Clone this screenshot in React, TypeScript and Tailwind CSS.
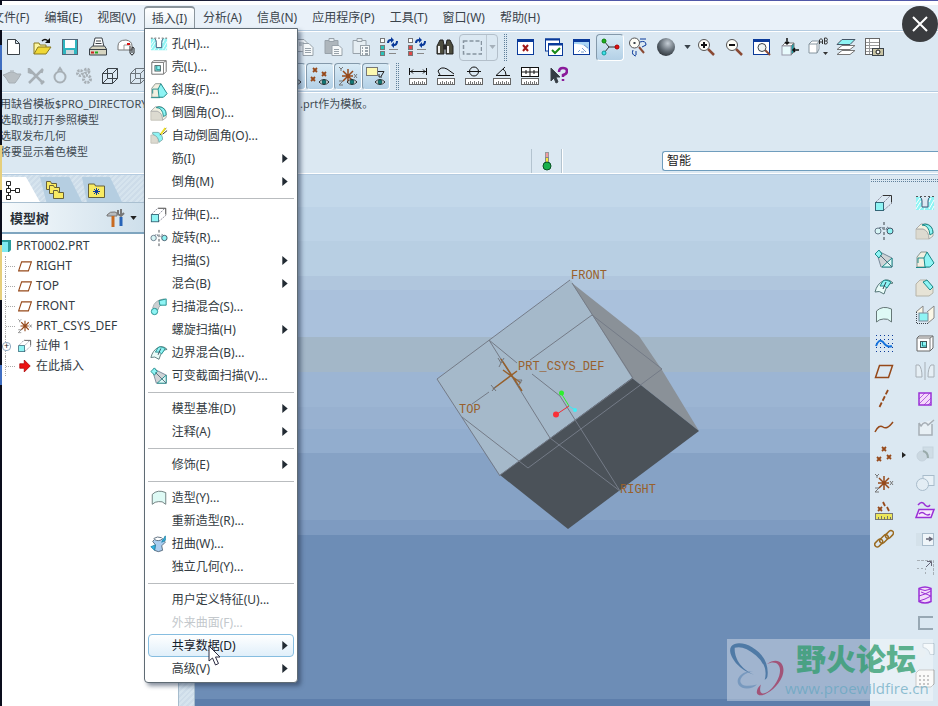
import type { ReactNode } from "react";

const K = "#3b4248";
const B = "#96491a";
const C = "#8ff4f4";
const T = "#1c8a8a";
const G = "#a7afb6";
const P = "#9a2fd6";
const N = "#0a3a9a";

function Ic({ children }: { children: ReactNode }) {
  return (
    <svg viewBox="0 0 20 20" className="h-5 w-5 shrink-0" fill="none" stroke={K} strokeWidth="1" aria-hidden="true">
      {children}
    </svg>
  );
}

/* ---------- shared glyph pieces ---------- */
const Ruler = () => (
  <g>
    <rect x="1.500" y="12.500" width="17" height="6" fill="#fff" stroke="#666" />
    <path d="M4.500 18v-2M6.500 18v-3M8.500 18v-2M10.500 18v-3M12.500 18v-2M14.500 18v-3M16.500 18v-2" stroke="#777" />
  </g>
);
const Eye = () => (
  <g>
    <path d="M9 16q5-5 10 0q-5 5-10 0z" fill="#fff" stroke="#222" />
    <circle cx="14" cy="16" r="2" fill="#127a78" stroke="#0c5050" />
  </g>
);
const Cube = ({ c = K }: { c?: string }) => (
  <path d="M2.500 7.500h10v10h-10zM7.500 2.500h10v10h-10zM2.500 7.500l5-5M12.500 7.500l5-5M2.500 17.500l5-5M12.500 17.500l5-5" stroke={c} />
);
const Window = ({ children }: { children?: ReactNode }) => (
  <g>
    <rect x="1.500" y="2.500" width="16" height="15" fill="#fff" stroke={N} />
    <path d="M1 3.500h17" stroke={N} strokeWidth="3" />
    {children}
  </g>
);
const Lens = ({ children }: { children?: ReactNode }) => (
  <g>
    <path d="M12 12l6 6" stroke="#8a4a34" strokeWidth="2.500" />
    <circle cx="8" cy="8" r="5.500" fill="#fdfdf6" stroke="#555" />
    {children}
  </g>
);
const ListSync = ({ c }: { c: string }) => (
  <g>
    <rect x="1.500" y="1.500" width="4" height="4" fill="#fff" stroke="#777" />
    <rect x="1.500" y="8.500" width="4" height="4" fill={c} stroke="#777" />
    <rect x="1.500" y="14.500" width="4" height="4" fill={c} stroke="#777" />
    <path d="M10 12.500h9M10 16.500h7" stroke="#888" />
    <path d="M9 6q0-3 3-3M18 4q0 4-3 4" stroke={N} strokeWidth="2" />
    <path d="M12 0v6l3-3zM15 5v6l-3-3z" stroke="none" fill={N} />
  </g>
);
const Datum3 = ({ c = B }: { c?: string }) => (
  <g>
    <path d="M10 3v14M4 10h11M5 5l10 10M15 5L5 15" stroke={c} strokeWidth="1.500" />
    <path d="M1 1l2 2 2-2M3 3v2M16 8l3 4M19 8l-3 4M1 15h4l-4 4h4" stroke="#777" />
  </g>
);
const Points = () => (
  <path d="M8 2l4 4M12 2l-4 4M3 12l4 4M7 12l-4 4M13 10l4 4M17 10l-4 4" stroke={B} strokeWidth="1.800" />
);

/* ---------- icon library ---------- */
const icons: Record<string, ReactNode> = {
  new: <path d="M3.500 2.500h8l4 4v11h-12zM11.500 2.500v4h4" fill="#fff" />,
  open: (
    <g>
      <path d="M2 17V6h5l1 2h6v3" fill="#fdf6a0" stroke="#8a7a20" />
      <path d="M2 17l4-7h13l-5 7z" fill="#f0d836" stroke="#8a7a20" />
      <path d="M10 4q3-3 6 0" stroke="#111" strokeWidth="1.500" />
      <path d="M18 1v5h-5z" stroke="none" fill="#111" />
    </g>
  ),
  save: (
    <g>
      <rect x="2.500" y="2.500" width="15" height="15" fill="#2fb6c0" stroke="#567" />
      <rect x="5" y="3" width="10" height="8" fill="#fff" stroke="none" />
      <rect x="6" y="13" width="8" height="4" fill="#cfd8dc" stroke="none" />
    </g>
  ),
  print: (
    <g>
      <path d="M5 10l2-9h7l2 9" fill="#fff" />
      <path d="M8 4h5M7.500 6.500h6" />
      <path d="M1.500 12l3-3h12l2 3v6h-17z" fill="#d6d4c0" />
      <path d="M1.500 12.500h17" />
      <path d="M3 15.500h3" stroke="#c22" strokeWidth="2" />
      <path d="M7 15.500h3" stroke="#2a2" strokeWidth="2" />
    </g>
  ),
  mail: (
    <g>
      <path d="M2 9q0-6 8-6 6 1 6 6v4H2z" fill="#fff" stroke="#777" />
      <path d="M8 13V8h7" stroke="#999" />
      <path d="M11 7h3" stroke="#d11" strokeWidth="2" />
      <path d="M14 9v7q2 4 4 0v-5q-2-2-2 0v5" stroke="#222" />
    </g>
  ),
  copy: (
    <g stroke="#98a2aa">
      <path d="M2 2.500h7l3 3v9H2z" fill="#eef3f6" />
      <path d="M8 6.500h6l4 4v8H8z" fill="#f6f9fa" />
      <path d="M10 11.500h6M10 13.500h6M10 15.500h6M4 6h5M4 8h3" />
    </g>
  ),
  paste: (
    <g stroke="#98a2aa">
      <path d="M2 3.500h13v13H2z" fill="#aeb6bc" />
      <path d="M6 1.500h5v3H6z" fill="#e6ecf0" />
      <path d="M9 8.500h7l3 3v7H9z" fill="#f6f9fa" />
      <path d="M11 12.500h5M11 14.500h5M11 16.500h5" />
    </g>
  ),
  pasteSp: (
    <g stroke="#98a2aa">
      <path d="M2 3.500h13v13H2z" fill="#e6eef3" />
      <path d="M6 1.500h5v3H6z" fill="#e6ecf0" />
      <rect x="9.500" y="8.500" width="9" height="10" fill="#f6f9fa" />
      <path d="M11 11h1M14 11h3M11 14h1M14 14h3M11 17h1M14 17h3" strokeWidth="2" />
    </g>
  ),
  regen: <ListSync c="#2ac2b8" />,
  regen2: <ListSync c="#e04848" />,
  find: (
    <g stroke="#222">
      <path d="M2 17V9l3-6h3l1 5v9zM11 17V8l1-5h3l3 6v8z" fill="#4d4d3e" />
      <path d="M4 9v7M13 9v7" stroke="#eee" strokeWidth="2" />
      <path d="M9 8h2v4H9z" fill="#333" />
    </g>
  ),
  marquee: <rect x="1.500" y="4" width="18" height="13" stroke="#8794a0" strokeWidth="1.500" strokeDasharray="4 2" />,
  winX: (
    <Window>
      <path d="M7 8l5 6M12 8l-5 6" stroke="#a01818" strokeWidth="2" />
    </Window>
  ),
  winOk: (
    <g>
      <rect x="1.500" y="2" width="14" height="12" fill="#fff" stroke={N} />
      <path d="M1 2.500h15" stroke={N} strokeWidth="2" />
      <rect x="4.500" y="6.500" width="14" height="12" fill="#fff" stroke={N} />
      <path d="M4 7.500h15" stroke={N} strokeWidth="2" />
      <path d="M8 13l3 3 5-5" stroke="#178a17" strokeWidth="2" />
    </g>
  ),
  repaint: (
    <Window>
      <path d="M2 5h15v10q-2-9-15-8z" fill="#a9d5f5" stroke="none" />
      <path d="M6 15l2-2M10 11l4 4M12 8l4 3M9 15h3" stroke="#7b9fd0" />
    </Window>
  ),
  spin: (
    <g>
      <path d="M4 4l5 6h9M9 10l-5 6" stroke="#333" />
      <circle cx="4" cy="4" r="2" fill="#1eb01e" stroke="#0b800b" />
      <circle cx="17" cy="10" r="2" fill="#e01010" stroke="#a00" />
      <circle cx="4" cy="16" r="2" fill="#3fe0e8" stroke="#199" />
    </g>
  ),
  orient: (
    <g>
      <path d="M11 10l5 6" stroke="#8a4a34" strokeWidth="2" />
      <circle cx="6.500" cy="6" r="5" fill="#fdfdf6" stroke="#555" />
      <path d="M5.500 6h2" strokeWidth="2" />
      <path d="M12 2h6M12 5q6-2 6 3l-4 2M5 13q-2 5 3 6M8 14v4" stroke={N} />
    </g>
  ),
  zoomIn: (
    <Lens>
      <path d="M5 8h6M8 5v6" stroke="#111" strokeWidth="2" />
    </Lens>
  ),
  zoomOut: (
    <Lens>
      <path d="M5 8h6" stroke="#111" strokeWidth="2" />
    </Lens>
  ),
  refit: (
    <Window>
      <path d="M13 13l5 5" stroke="#8a4a34" strokeWidth="2" />
      <circle cx="10" cy="10.500" r="4" fill="#eef4f4" />
    </Window>
  ),
  reorient: (
    <g>
      <path d="M2 9l3-3h9l-3 3z" fill="#fff" stroke="#777" />
      <path d="M11 9l3-3v9l-3 3z" fill="#1fa0a8" stroke="#777" />
      <rect x="2" y="9" width="9" height="9" fill="#e8fafc" stroke="#99a" />
      <path d="M7 1v6M5 5l2 2 2-2M19 13h-6M15 11l-2 2 2 2" stroke="#111" strokeWidth="1.500" />
    </g>
  ),
  views: (
    <g>
      <path d="M1 7l3-3h7v8l-2 4H1z" fill="#fff" stroke="#8796a0" />
      <path d="M1 7h8v9M9 7l2-3" stroke="#8796a0" />
      <path d="M11.500 7V3q1.500-3 3 0v4M11.500 5h3M16.500 1v6h2q2-2 0-3 2-1 0-3zM16.500 4h2" stroke="#333" />
      <path d="M15 15h5l-2.500 3z" fill="#333" stroke="none" />
    </g>
  ),
  layers: (
    <g>
      <path d="M1 17.500l5-4h13l-5 4z" fill="#fff" stroke="#777" />
      <path d="M1 12.500l5-4h13l-5 4z" fill="#fff" stroke="#777" />
      <path d="M1 7.500l5-5h13l-5 5z" fill={C} stroke="#456" />
    </g>
  ),
  viewmgr: (
    <g>
      <rect x="1.500" y="1.500" width="14" height="16" fill="#fff" stroke="#666" />
      <path d="M5.500 2v15M2 5.500h13M2 8.500h13M2 11.500h13M2 14.500h13" stroke="#999" />
      <rect x="8.500" y="11.500" width="11" height="7" fill="#c9c4a4" />
      <circle cx="14" cy="15" r="2" fill="#fff" stroke="#111" />
    </g>
  ),
  teapot: <path d="M4 8q6-4 11 0l4 0-3 5-3 4H7L4 12 1 9zM8 5h4" fill="#b9c0c5" stroke="#a7afb5" />,
  tools: <path d="M3 3l14 14M17 3L3 17M3 2v4l3 1M14 5l3 1M15 18l3-3" stroke="#a7afb5" strokeWidth="2.500" />,
  ring: (
    <g stroke="#a7afb5">
      <circle cx="10" cy="11" r="5.500" strokeWidth="2" />
      <path d="M8 5l2-3 2 3" strokeWidth="2" />
    </g>
  ),
  gears: (
    <g stroke="#a7afb5" strokeWidth="3" strokeDasharray="2 1">
      <circle cx="6" cy="7" r="2.500" />
      <circle cx="13" cy="5" r="2" />
      <circle cx="13" cy="13" r="3.500" />
    </g>
  ),
  cube: <Cube />,
  cube2: <Cube c="#6d757c" />,
  dPlane: (
    <g>
      <path d="M2 10l3-7h9l-3 7z" stroke={B} />
      <Eye />
    </g>
  ),
  dPoints: (
    <g>
      <path d="M3 2l4 4M7 2l-4 4M1 11l4 4M5 11l-4 4M12 6l4 4M16 6l-4 4" stroke={B} strokeWidth="1.800" />
      <Eye />
    </g>
  ),
  dCsys: (
    <g>
      <Datum3 />
      <Eye />
    </g>
  ),
  dNote: (
    <g>
      <rect x="0.500" y="1.500" width="11" height="8" fill="#fdf9b0" stroke="#777" />
      <path d="M12 5.500h6l-3 5M13 8v3h3" stroke="#222" />
      <Eye />
    </g>
  ),
  mDist: (
    <g>
      <path d="M1.500 2v7M18.500 2v7M2 5.500h16M5 3.500l-2 2 2 2M15 3.500l2 2-2 2" stroke="#111" />
      <Ruler />
    </g>
  ),
  mLen: (
    <g>
      <path d="M2 9.500h16M4 9L2 5q3-5 9-2l7 5" stroke="#111" />
      <Ruler />
    </g>
  ),
  mDia: (
    <g>
      <circle cx="10" cy="5.500" r="4.500" stroke="#111" />
      <path d="M3 5.500h14" stroke="#111" />
      <Ruler />
    </g>
  ),
  mAng: (
    <g>
      <path d="M13 1L4 9.500h14M11 3q3 2 3 6" stroke="#111" />
      <Ruler />
    </g>
  ),
  mArea: (
    <g>
      <rect x="1.500" y="1.500" width="17" height="9" fill="#fff" stroke="#111" />
      <path d="M2 6h16M10 1v9M6 4v4M14 4v4" stroke="#111" />
      <Ruler />
    </g>
  ),
  help: (
    <g>
      <path d="M3 2v13l3-3 2 5 2-1-2-5h4z" fill="#333b44" />
      <path d="M11 6q0-4 4-4t4 3q0 3-4 4v2M15 13v2" stroke="#8a1a9a" strokeWidth="2.500" />
    </g>
  ),
  /* feature icons */
  hole: (
    <g>
      <path d="M1 4h4q2 0 2 4v6h6V8q0-4 2-4h4v13H1z" fill={C} stroke="none" />
      <path d="M1 11L5 5M1 16l5-8M4 17l4-5M9 17l1-2M14 16l5-9M17 17l2-4M14 9l2-4" stroke="#fff" />
      <path d="M5 4q2 1 2 4v6h6V8q0-3 2-4" stroke="#3c5574" />
      <path d="M1 3.500h18" stroke="#555" strokeDasharray="2 2" />
    </g>
  ),
  shell: (
    <g>
      <path d="M2 5l2-2h14v12l-3 3H2z" fill="#fff" stroke="#666" />
      <path d="M2 5h13v13M15 5l3-2" stroke="#777" />
      <rect x="5.500" y="8.500" width="6" height="6" fill={C} stroke="#455" />
      <path d="M7.500 9v4h4" stroke={T} />
    </g>
  ),
  draft: (
    <g>
      <path d="M2 8l4-5h6l6 12-4 3H2z" fill="#f2efe0" stroke="#8a968f" />
      <path d="M12 3l-3 6 1 9h5l4-4z" fill={C} stroke={T} />
      <path d="M1 18.500h10M3 14V9h6" stroke={T} />
    </g>
  ),
  round: (
    <g>
      <path d="M1 8h8q5 2 5 10H1z" fill="#dcdad0" stroke="#c4c2b8" />
      <path d="M1 8l5-5h6q7 2 6 12l-4 3q0-8-6-10z" fill="#f3f1e2" stroke="#aaa" />
      <path d="M7 4q7 0 8 10l3-2q0-8-8-9z" fill={C} stroke={T} />
    </g>
  ),
  autoRound: (
    <g>
      <path d="M1 9h8v9H1z" fill="#dcdad0" stroke="#c4c2b8" />
      <path d="M3 6h6q5 2 5 8l-4 3q0-6-7-9z" fill={C} stroke="#7aa" />
      <path d="M18 1l-7 8M19 4l-5 4" stroke="#222" />
      <path d="M17 1l-5 7" stroke="#f0e020" strokeWidth="2" />
    </g>
  ),
  extrude: (
    <g>
      <rect x="1.500" y="9.500" width="8" height="8" fill={C} stroke="#367" />
      <path d="M2 9l7-7M10 9l6-6M10 17l8-7" stroke="#889" strokeDasharray="2 1" />
      <path d="M9 2.500h8.500v7" stroke="#333" />
    </g>
  ),
  revolve: (
    <g>
      <circle cx="4" cy="10" r="3" fill="#d7f5f5" stroke="#678" />
      <circle cx="16" cy="10" r="3" fill={C} stroke="#456" />
      <path d="M10 1v18" strokeDasharray="3 2" />
      <path d="M5 7l3-1 1 3M12 9l1-3 2 1" stroke="#678" strokeDasharray="2 1" />
    </g>
  ),
  sweepBlend: (
    <g>
      <path d="M9 13q1-6 7-6V1Q5 2 3 11z" fill="#ccd0d2" stroke="#9aa" />
      <path d="M10 3l8-2v7h-7z" fill={C} stroke={T} />
      <circle cx="5" cy="15" r="3.500" fill={C} stroke={T} />
    </g>
  ),
  boundary: (
    <g>
      <path d="M1 15q2-8 8-11 5-3 10 2-6 0-9 11-5-4-9-2z" fill="#e9fbf8" stroke="#577" />
      <path d="M6 9q5-1 7 2l4-6q-6-3-8-1z" fill={C} stroke={T} />
      <path d="M9 12l3-7" stroke="#345" />
    </g>
  ),
  varSweep: (
    <g>
      <path d="M4 2l14 7v9H7L4 8z" fill="#cfd3d6" stroke="#789" />
      <path d="M8 18h10V9z" fill="#dff8f6" stroke={T} />
      <path d="M1 5l4-4 3 4-3 4z" fill={C} stroke={T} />
      <path d="M6 6l12 12" stroke="#567" />
    </g>
  ),
  style: <path d="M2.500 17V6q6-6 15-2v13q-4-4-8-3-4 0-7 3z" fill="#defaf5" stroke="#677" />,
  warp: (
    <g>
      <path d="M5 5q5 3 9-1l3 4-4 4 1 5q-5 3-9 0l1-6-3-4z" fill="#a9cdf0" stroke="#567" />
      <path d="M1 13l5-2-1 6zM17 1v5l-4 2z" fill="#30b5e8" stroke="#28a" />
      <path d="M4 4q4-3 9-1" stroke="#567" />
    </g>
  ),
  sketch: (
    <g>
      <path d="M2 2.500h17M2 6.500h17M2 10.500h17M2 14.500h17M2 18.500h17" stroke={N} strokeDasharray="1 3" />
      <path d="M2 13q3-8 7-4 4 6 9 4" stroke="#1673dc" strokeWidth="2" />
    </g>
  ),
  plane: <path d="M5.500 4.500h13l-4 12h-13z" stroke={B} strokeWidth="1.500" />,
  axis: <path d="M14 1L5 19" stroke={B} strokeWidth="1.800" strokeDasharray="5 2" />,
  curve: <path d="M1 15q4-8 8-5t10-5" stroke={B} strokeWidth="1.500" />,
  points: <Points />,
  csys: <Datum3 />,
  analysis: (
    <g>
      <path d="M4 6l4 4M8 6l-4 4M9 1l2 4M13 6l2 4" stroke={B} strokeWidth="1.800" />
      <rect x="1.500" y="12.500" width="17" height="6" fill="#ece65a" stroke="#777" />
      <path d="M4.500 16v3M7.500 15v4M10.500 16v3M13.500 15v4M16.500 16v3" stroke="#776" />
    </g>
  ),
  chain: (
    <g stroke="#9a6a20" strokeWidth="1.500">
      <rect x="0" y="12" width="9" height="5" rx="2.500" transform="rotate(-45 4 14)" />
      <rect x="5" y="7.500" width="10" height="5" rx="2.500" transform="rotate(-45 10 10)" />
      <rect x="11" y="3" width="9" height="5" rx="2.500" transform="rotate(-45 15.500 5.500)" />
    </g>
  ),
  chamfer: (
    <g>
      <path d="M1 7l4-4h7l6 7v6l-4 3H1z" fill="#e6e3d6" stroke="#b5b3a8" />
      <path d="M8 5l4-2 6 7-3 3z" fill={C} stroke={T} />
    </g>
  ),
  rib: (
    <g>
      <path d="M1 7l7-6v9M12 7l7-6v12l-6 5" fill="#fbf7e6" stroke="#888" />
      <rect x="4" y="8" width="9" height="8" fill={C} stroke="#789" />
      <path d="M1.500 7v11.500h12" strokeDasharray="1 1" />
    </g>
  ),
  mirror: (
    <g stroke={G}>
      <path d="M10 1v18" />
      <path d="M1 4h3q3 3 3 12H1zM19 4h-3q-3 3-3 12h6z" fill="#e6eff5" />
    </g>
  ),
  fill: (
    <g>
      <rect x="4" y="4" width="12" height="12" fill="#f4d9fa" stroke={P} strokeWidth="1.500" />
      <path d="M4 10l6-6M4 15L15 4M9 16l7-7M13 16l3-3" stroke={P} strokeWidth=".7" />
    </g>
  ),
  trimS: <path d="M4 6l2 3q4-6 7-1l6-5M4 6v12h13V7" stroke={G} strokeWidth="1.500" fill="#e8f0f5" />,
  merge: (
    <g stroke="#c6d3dd">
      <rect x="8" y="2" width="10" height="11" fill="#cfdde6" />
      <circle cx="7" cy="11" r="5" fill="#cbd8e1" />
      <path d="M8 6q5 1 5 7" stroke="#9aa" strokeWidth="2" />
    </g>
  ),
  intersect: (
    <g stroke="#a9bccb">
      <rect x="8" y="2.500" width="11" height="10" fill="#e8f1f7" />
      <circle cx="7.500" cy="11.500" r="6" fill="#e3edf4" />
    </g>
  ),
  offset: (
    <g stroke={P} strokeWidth="1.500">
      <path d="M3 4q4-5 7 0 3 3 5 0" />
      <path d="M4 8.500h15l-3 8H1z" fill="#f7e8fc" />
      <path d="M4 13q3-3 6 0 3 2 5 0" />
    </g>
  ),
  extend: (
    <g stroke="#a9bccb">
      <path d="M1 4h7v13H1z" fill="#d4e1ea" stroke="none" />
      <rect x="7.500" y="4.500" width="11" height="12" fill="#eff5f9" />
      <path d="M11 10h6M14 8l3 2-3 2" stroke="#667" strokeWidth="1.500" />
    </g>
  ),
  trim: (
    <g stroke={G}>
      <path d="M2 3.500h16.500V18" strokeDasharray="3 1" />
      <path d="M2 11.500h8.500V18" strokeDasharray="2 2" />
      <path d="M11 10l5-5M12 4.500h4.500V9" stroke="#667" />
    </g>
  ),
  thicken: (
    <g stroke={P}>
      <path d="M4 3.500q6-3 12 0v13q-6 3-12 0z" fill="#f2dcfa" strokeWidth="1.500" />
      <path d="M4 4q6 3 12 0M4 11l6-2 6-3M4 16l6-2 6-3M6 7l10 4" />
    </g>
  ),
  pattern: <path d="M18 4H4v12h14" stroke="#98a8b4" strokeWidth="2" />,
  corner: (
    <g stroke="#b5c5d0">
      <path d="M8 2.500h11v11h-4q-1-6-7-7z" fill="#f2f7fa" />
      <circle cx="6" cy="12" r="5" fill="#dde8ef" stroke="none" />
    </g>
  ),
  grid: (
    <g stroke="#aaa">
      <path d="M1 4l3-3h15v14l-3 3H1z" fill="#f8f8f6" />
      <path d="M4 7h11M4 11h11M4 15h11" strokeDasharray="2 2" strokeWidth="2" />
    </g>
  ),
};

const menus = ["文件(F)", "编辑(E)", "视图(V)", "插入(I)", "分析(A)", "信息(N)", "应用程序(P)", "工具(T)", "窗口(W)", "帮助(H)"];

type Item = { t: string; i?: string; sub?: boolean; off?: boolean; hot?: boolean };
const groups: Item[][] = [
  [
    { t: "孔(H)...", i: "hole" },
    { t: "壳(L)...", i: "shell" },
    { t: "斜度(F)...", i: "draft" },
    { t: "倒圆角(O)...", i: "round" },
    { t: "自动倒圆角(O)...", i: "autoRound" },
    { t: "筋(I)", sub: true },
    { t: "倒角(M)", sub: true },
  ],
  [
    { t: "拉伸(E)...", i: "extrude" },
    { t: "旋转(R)...", i: "revolve" },
    { t: "扫描(S)", sub: true },
    { t: "混合(B)", sub: true },
    { t: "扫描混合(S)...", i: "sweepBlend" },
    { t: "螺旋扫描(H)", sub: true },
    { t: "边界混合(B)...", i: "boundary" },
    { t: "可变截面扫描(V)...", i: "varSweep" },
  ],
  [
    { t: "模型基准(D)", sub: true },
    { t: "注释(A)", sub: true },
  ],
  [{ t: "修饰(E)", sub: true }],
  [{ t: "造型(Y)...", i: "style" }, { t: "重新造型(R)..." }, { t: "扭曲(W)...", i: "warp" }, { t: "独立几何(Y)..." }],
  [
    { t: "用户定义特征(U)..." },
    { t: "外来曲面(F)...", off: true },
    { t: "共享数据(D)", sub: true, hot: true },
    { t: "高级(V)", sub: true },
  ],
];

function InsertMenu() {
  return (
    <div role="menu" className="absolute top-[22px] left-0 w-[154px] rounded-b border border-[#5f6b74] bg-white px-[3px] pt-[3px] pb-[2px] shadow-[3px_3px_4px_rgba(40,55,80,0.55)]">
      {groups.map((g, n) => (
        <div key={n} role="group">
          {n > 0 && (
            <div className="flex h-[10px] items-center">
              <div className="h-px w-full bg-[#b9bcbf]" />
            </div>
          )}
          {g.map((m) => (
            <button
              key={m.t}
              role="menuitem"
              disabled={m.off}
              className={
                "flex h-[23px] w-full items-center rounded-sm border pr-[5px] text-left whitespace-nowrap " +
                (m.hot
                  ? "border-[#86bde0] bg-gradient-to-b from-white to-[#e0effa] text-[#14202a]"
                  : m.off
                    ? "border-transparent text-[#c3c8cc]"
                    : "border-transparent text-[#333b42]")
              }
            >
              <span className="flex w-[23px] shrink-0">
                {m.i && (
                  <span className="scale-90">
                    <Ic>{icons[m.i]}</Ic>
                  </span>
                )}
              </span>
              <span className="flex-1">{m.t}</span>
              {m.sub && (
                <svg viewBox="0 0 6 10" className="h-[9px] w-[6px]" aria-hidden="true">
                  <path d="M0 0l6 5-6 5z" fill="#222b33" />
                </svg>
              )}
            </button>
          ))}
        </div>
      ))}
    </div>
  );
}

function Tool({ i, on, narrow }: { i: string; on?: boolean; narrow?: boolean }) {
  return (
    <button
      aria-label={i}
      className={
        "flex h-[27px] shrink-0 items-center justify-center rounded-[4px] border " +
        (narrow ? "w-6 " : "w-7 ") +
        (on ? "border-[#8499aa] border-r-white border-b-white bg-gradient-to-b from-[#d9ebf6] to-[#b3d0e6]" : "border-transparent")
      }
    >
      <Ic>{icons[i]}</Ic>
    </button>
  );
}

const Grip = () => (
  <span className="flex w-[14px] shrink-0 justify-center">
    <span className="h-[27px] w-1 bg-[conic-gradient(#5f7f9a_25%,transparent_0)] bg-[size:2px_2px]" />
  </span>
);

const Down = ({ c }: { c: string }) => (
  <svg viewBox="0 0 8 5" className="h-1 w-[7px]" aria-hidden="true">
    <path d="M0 0h8L4 5z" fill={c} />
  </svg>
);

function Toolbars() {
  return (
    <div className="overflow-hidden border-t border-[#b4cbe0] bg-[#dbe8f2] pt-[2px] shadow-[inset_0_1px_0_#fff]">
      <div className="flex h-7 items-center">
        {["new", "open", "save", "print", "mail"].map((i) => <Tool key={i} i={i} />)}
        <span className="w-[151px] shrink-0" />
        {["copy", "paste", "pasteSp", "regen", "regen2", "find"].map((i) => <Tool key={i} i={i} />)}
        <button aria-label="select" className="flex h-[27px] w-[39px] shrink-0 items-center rounded border border-[#b3bfca] pl-[2px]">
          <Ic>{icons.marquee}</Ic>
          <span className="ml-[4px] flex h-full flex-1 items-center justify-center border-l border-[#bcc8d2]">
            <Down c="#a5b0ba" />
          </span>
        </button>
        <Grip />
        {["winX", "winOk", "repaint"].map((i) => <Tool key={i} i={i} />)}
        <Tool i="spin" on />
        <Tool i="orient" />
        <button aria-label="shade" className="flex w-10 shrink-0 items-center gap-[9px] pl-[5px]">
          <span className="h-[18px] w-[18px] rounded-full bg-[radial-gradient(circle_at_60%_30%,#c5ced6,#5c666f_50%,#101418)]" />
          <Down c="#3a434b" />
        </button>
        {["zoomIn", "zoomOut", "refit", "reorient", "views", "layers", "viewmgr"].map((i) => <Tool key={i} i={i} />)}
      </div>
      <div className="flex h-[30px] items-center">
        {["teapot", "tools", "ring", "gears"].map((i) => <Tool key={i} i={i} narrow />)}
        {["cube", "cube2"].map((i) => <Tool key={i} i={i} />)}
        <span className="w-[126px] shrink-0" />
        {["dPlane", "dPoints", "dCsys", "dNote"].map((i) => <Tool key={i} i={i} on />)}
        <Grip />
        {["mDist", "mLen", "mDia", "mAng", "mArea", "help"].map((i) => <Tool key={i} i={i} />)}
      </div>
    </div>
  );
}

function Messages() {
  return (
    <div className="flex h-[84px] border-y border-[#b4cbe0] bg-[#dbe8f2] shadow-[inset_0_1px_0_#fff,inset_0_-1px_0_#fff]">
      <div className="flex-1 pt-1 text-[11px] leading-4 whitespace-nowrap text-[#414b53]">
        <p className="flex">
          <span className="w-[300px]">用缺省模板$PRO_DIRECTORY</span>
          <span>.prt作为模板。</span>
        </p>
        <p>选取或打开参照模型</p>
        <p>选取发布几何</p>
        <p>将要显示着色模型</p>
      </div>
      <div className="flex w-[407px] items-center self-end pb-px">
        <span className="flex h-6 w-[31px] items-center justify-center border-x border-[#b3c3cf] shadow-[1px_0_0_#fff]">
          <svg viewBox="0 0 10 20" className="h-5 w-[10px]" aria-hidden="true">
            <rect x="3.500" y="1.500" width="3" height="5" fill="#f09aa0" stroke="#999" />
            <rect x="3.500" y="6.500" width="3" height="5" fill="#f6e940" stroke="#888" />
            <circle cx="5" cy="15" r="4" fill="#18b04c" stroke="#0a5224" />
          </svg>
        </span>
        <select aria-label="选择过滤器" className="ml-[100px] h-5 flex-1 appearance-none rounded-l-[3px] border border-r-0 border-[#6f9dbd] bg-white pl-1 text-xs leading-4 text-[#222]">
          <option>智能</option>
        </select>
      </div>
    </div>
  );
}

const tree: { t: string; i: string; plus?: boolean }[] = [
  { t: "RIGHT", i: "plane" },
  { t: "TOP", i: "plane" },
  { t: "FRONT", i: "plane" },
  { t: "PRT_CSYS_DEF", i: "csys" },
  { t: "拉伸 1", i: "extrude", plus: true },
  { t: "在此插入", i: "arrow" },
];

function ModelTree() {
  return (
    <aside className="flex w-[178px] shrink-0 flex-col bg-white">
      <div className="flex h-7 items-end border-b border-[#a9bfd0] bg-[repeating-linear-gradient(135deg,#cddce9_0_2px,#d6e4ee_2px_4px)]">
        <button aria-label="模型树" className="flex h-[25px] w-10 items-center bg-white pl-1 [clip-path:polygon(0_0,65%_0,100%_100%,0_100%)]">
          <Ic>
            <path d="M2.500 1.500h4v4h-4zM2.500 8.500h4v4h-4zM2.500 15.500h4v4h-4zM11.500 8.500h4v4h-4zM7 10.500h4M4.500 5.500v3M4.500 12.500v3" stroke="#222" />
          </Ic>
        </button>
        <button aria-label="文件夹浏览器" className="flex h-[25px] w-[42px] items-center bg-[#b5cee1] pl-[5px] [clip-path:polygon(0_0,70%_0,100%_100%,15%_100%)]">
          <Ic>
            <g fill="#f8ea62" stroke="#66603a">
              <path d="M1.500 1.500h4l1 2h5v6h-10z" />
              <path d="M4.500 5.500h4l1 2h5v6h-10z" />
              <path d="M8.500 10.500h4l1 2h5v6h-10z" />
            </g>
          </Ic>
        </button>
        <button aria-label="收藏夹" className="flex h-[25px] w-10 items-center bg-[#b5cee1] pl-[5px] [clip-path:polygon(0_0,70%_0,100%_100%,12%_100%)]">
          <Ic>
            <path d="M1.500 4h6l1 2h9v11.500h-16z" fill="#f8ea62" stroke="#66603a" />
            <path d="M9.500 8v7M6 11.500h7M7 9l5 5M12 9l-5 5" stroke="#123c9c" />
          </Ic>
        </button>
      </div>
      <div className="flex h-[31px] items-center border-b-2 border-[#7fa5bf] bg-gradient-to-r from-[#f6fafc] to-[#c5d9e7] pl-[10px]">
        <h2 className="w-24 text-[13px] leading-4 font-bold text-[#2a3138]">模型树</h2>
        <button aria-label="设置" className="flex items-center gap-1">
          <Ic>
            <path d="M1 7q3-4 8-3l2 1v3H1z" fill="#b7bcc0" stroke="#777" />
            <path d="M7 8v11" stroke="#c86a20" strokeWidth="3" />
            <path d="M12 2v4l3 2 3-3M15 1v7" stroke="#777" strokeWidth="2" />
            <path d="M15 9v9" stroke="#2864b8" strokeWidth="3" />
          </Ic>
          <Down c="#222" />
        </button>
      </div>
      <ul className="pt-[2px] text-xs leading-4 text-[#333b42]">
        <li className="flex h-5 items-center gap-[5px]">
          <svg viewBox="0 0 11 12" className="h-3 w-[11px]" aria-hidden="true">
            <path d="M0 2l2-2h9v10l-2 2H0z" fill="#2a9c9c" />
            <path d="M0 2h8v10H0z" fill="#7feaf0" />
          </svg>
          <span>PRT0002.PRT</span>
        </li>
        {tree.map((r) => (
          <li key={r.t} className="flex h-5 items-center">
            <span className="ml-[5px] flex h-5 w-[10px] items-center border-l border-dotted border-[#aaa]">
              {r.plus ? (
                <button aria-label="展开" className="-ml-1 h-[9px] w-[9px] rounded-sm border border-[#8fa8c0] bg-white text-[9px] leading-[6px] text-[#222]">
                  +
                </button>
              ) : (
                <span className="w-full border-t border-dotted border-[#aaa]" />
              )}
            </span>
            <span className="mr-px scale-75">
              <Ic>{r.i === "arrow" ? <path d="M3 7h6V2l8 8-8 8v-5H3z" fill="#ec1212" stroke="#a00" /> : icons[r.i]}</Ic>
            </span>
            <span>{r.t}</span>
          </li>
        ))}
      </ul>
    </aside>
  );
}

function Viewport() {
  return (
    <main className="relative min-w-0 flex-1 overflow-hidden bg-[linear-gradient(to_bottom,#c3d8ea_0_32px,#bdd3e7_32px_66px,#b8cfe3_66px_101px,#b0c6dd_101px_115px,#aac1dc_115px_162px,#a3b7c8_162px_197px,#9cb5d3_197px_232px,#98b1d0_232px_254px,#92adce_254px_278px,#86a2c5_278px_345px,#7e9bc1_345px_360px,#6d8db6_360px_524px,#5d7eab_524px)]">
      <svg viewBox="195 175 675 531" className="absolute top-0 left-0 h-[531px] w-[675px]" fill="none" aria-label="PRT0002">
        <path d="M571 280L437 379l63 96 132-97z" fill="#a5b9ca" />
        <path d="M572 283l67 53 23 34 37 61-67-53z" fill="#8a9198" />
        <path d="M500 475l132-97 67 53-131 98z" fill="#4b5259" />
        <g stroke="#747b87">
          <path d="M570 280L437 379l63 97M572 283l61 95-133 97" />
          <path d="M530 360l62-45 70 54-134 99-66-51M472 404l17-12" />
          <path d="M489 340l61 98 70 53M489 340l28 23M532 374l28 22 60 95" />
        </g>
        <g stroke="#96602c" strokeWidth="1.500">
          <path d="M501 359l21 32M493 389l24-18M503 370l18 13" />
        </g>
        <path d="M498 358l3 5 3-5M501 363l-2 4M491 385l5 6M496 386l-4 5M517 380h5l-4 6" stroke="#70757c" />
        <path d="M569 406l-8-13" stroke="#2df02d" />
        <path d="M569 406l-12 8" stroke="#f02c34" />
        <path d="M569 406l6 4" stroke="#3de8f4" />
        <circle cx="561.500" cy="393" r="2.500" fill="#2df02d" />
        <circle cx="556" cy="414.500" r="3" fill="#fa3038" />
        <circle cx="575" cy="410" r="2" fill="#3df0f8" />
        <g fill="#98602c" className="font-['Liberation_Mono',monospace] text-[12px]">
          <text x="571" y="279">FRONT</text>
          <text x="518" y="370">PRT_CSYS_DEF</text>
          <text x="459" y="413">TOP</text>
          <text x="620" y="493">RIGHT</text>
        </g>
      </svg>
    </main>
  );
}

const colA = ["extrude", "revolve", "varSweep", "boundary", "style", "sketch", "plane", "axis", "curve", "points", "csys", "analysis", "chain"];
const colB = ["hole", "round", "draft", "chamfer", "rib", "shell", "mirror", "fill", "trimS", "merge", "intersect", "offset", "extend", "trim", "thicken", "pattern", "corner", "grid"];

function FeatureBars() {
  return (
    <div className="w-[68px] shrink-0 overflow-hidden bg-[#dbe8f2] pt-1">
      <div className="h-1 bg-[conic-gradient(#5f7f9a_25%,transparent_0)] bg-[size:2px_2px]" />
      <div className="flex justify-between pt-[6px]">
        <div className="flex w-9 flex-col">
          {colA.map((i) => (
            <div key={i} className="flex h-7 items-center">
              <Tool i={i} />
              {i === "points" && (
                <svg viewBox="0 0 4 6" className="ml-1 h-[6px] w-1" aria-hidden="true">
                  <path d="M0 0l4 3-4 3z" fill="#222" />
                </svg>
              )}
            </div>
          ))}
        </div>
        <div className="flex w-[27px] flex-col">
          {colB.map((i) => (
            <div key={i} className="flex h-7 items-center">
              <Tool i={i} />
            </div>
          ))}
        </div>
      </div>
    </div>
  );
}

function Watermark() {
  return (
    <div className="pointer-events-none absolute right-[5px] bottom-[5px] flex h-[62px] w-[206px] bg-white/35">
      <svg viewBox="0 0 60 62" className="h-[62px] w-[58px] shrink-0" aria-hidden="true">
        <g opacity=".8">
          <path d="M28 36C8 30-4 8 8 4s36 10 34 32q0 4-3 5 4-14-9-25T8 8s-2 18 20 28z" fill="#3c6c9c" />
          <path d="M27 32C10 32 6 47 18 50q8 1 13-4-8 2-13 1c-8-3-4-12 9-15z" fill="#6f93bb" />
          <path d="M41 25c12-9 21 0 16 13S34 62 31 55q-1-4 4-9-2 8 1 9c5 2 15-8 18-18s-2-17-13-12z" fill="#a33d63" />
        </g>
      </svg>
      <div className="whitespace-nowrap">
        <p className="pl-[11px] text-[30px] leading-[40px] font-black text-[#2e9b6c]/75">野火论坛</p>
        <p className="font-['Open_Sans',sans-serif] text-[15px] leading-[18px] text-[#63a6c0]/70">www.proewildfire.cn</p>
      </div>
    </div>
  );
}

export default function App() {
  return (
    <div className="relative flex h-screen w-full flex-col overflow-hidden bg-white font-['Noto_Sans','Noto_Sans_CJK_SC',sans-serif] text-xs">
      <div className="flex h-[5px] shrink-0 flex-col">
        <div className="h-px bg-gradient-to-r from-[#15182c] from-20% to-[#5057a8] to-40%" />
      </div>
      <nav className="relative z-20 -ml-[15px] flex h-[25px] shrink-0 gap-px bg-[#e9f1f9] pt-px text-[#3a434b]">
        {menus.map((m) => {
          const open = m === "插入(I)";
          return (
            <div key={m} className="relative">
              <button
                aria-haspopup="menu"
                aria-expanded={open}
                className={
                  "h-6 px-[7px] whitespace-nowrap " +
                  (open ? "rounded-t border border-t-2 border-b-0 border-[#8b959c] bg-gradient-to-b from-white to-[#e6eff6] leading-[18px]" : "leading-[22px]")
                }
              >
                {m}
              </button>
              {open && <InsertMenu />}
            </div>
          );
        })}
      </nav>
      <div className="shrink-0">
        <Toolbars />
      </div>
      <div className="shrink-0">
        <Messages />
      </div>
      <div className="flex min-h-0 flex-1">
        <ModelTree />
        <div className="w-[17px] shrink-0 border-x border-[#a6bccd] bg-[repeating-linear-gradient(135deg,#cddce9_0_2px,#d6e4ee_2px_4px)]" />
        <Viewport />
        <FeatureBars />
      </div>
      <div className="absolute inset-y-0 left-0 w-[2px] bg-[linear-gradient(to_bottom,#0a0d1c_0_45px,#3f6dc0_45px_70px,#0a0d1c_70px_145px,#e6cf7c_145px_190px,#0a0d1c_190px_245px,#e6cf7c_245px_300px,#0a0d1c_300px_365px,#3f6dc0_365px_385px,#0a0d1c_385px)]" />
      <Watermark />
      <svg viewBox="0 0 14 22" className="absolute top-[645px] left-[208px] z-30 h-[22px] w-[14px]" aria-hidden="true">
        <path d="M1 1v15l3.500-3 3 7 3-1.500-3-6.500H12z" fill="#fff" stroke="#2a2a40" />
      </svg>
      <button aria-label="close" className="absolute top-[6px] right-0 z-30 flex h-9 w-9 items-center justify-center rounded-full bg-[#3a3c3f]">
        <svg viewBox="0 0 16 16" className="h-4 w-4" stroke="#fff" strokeWidth="2" aria-hidden="true">
          <path d="M1 1l14 14M15 1L1 15" />
        </svg>
      </button>
    </div>
  );
}
